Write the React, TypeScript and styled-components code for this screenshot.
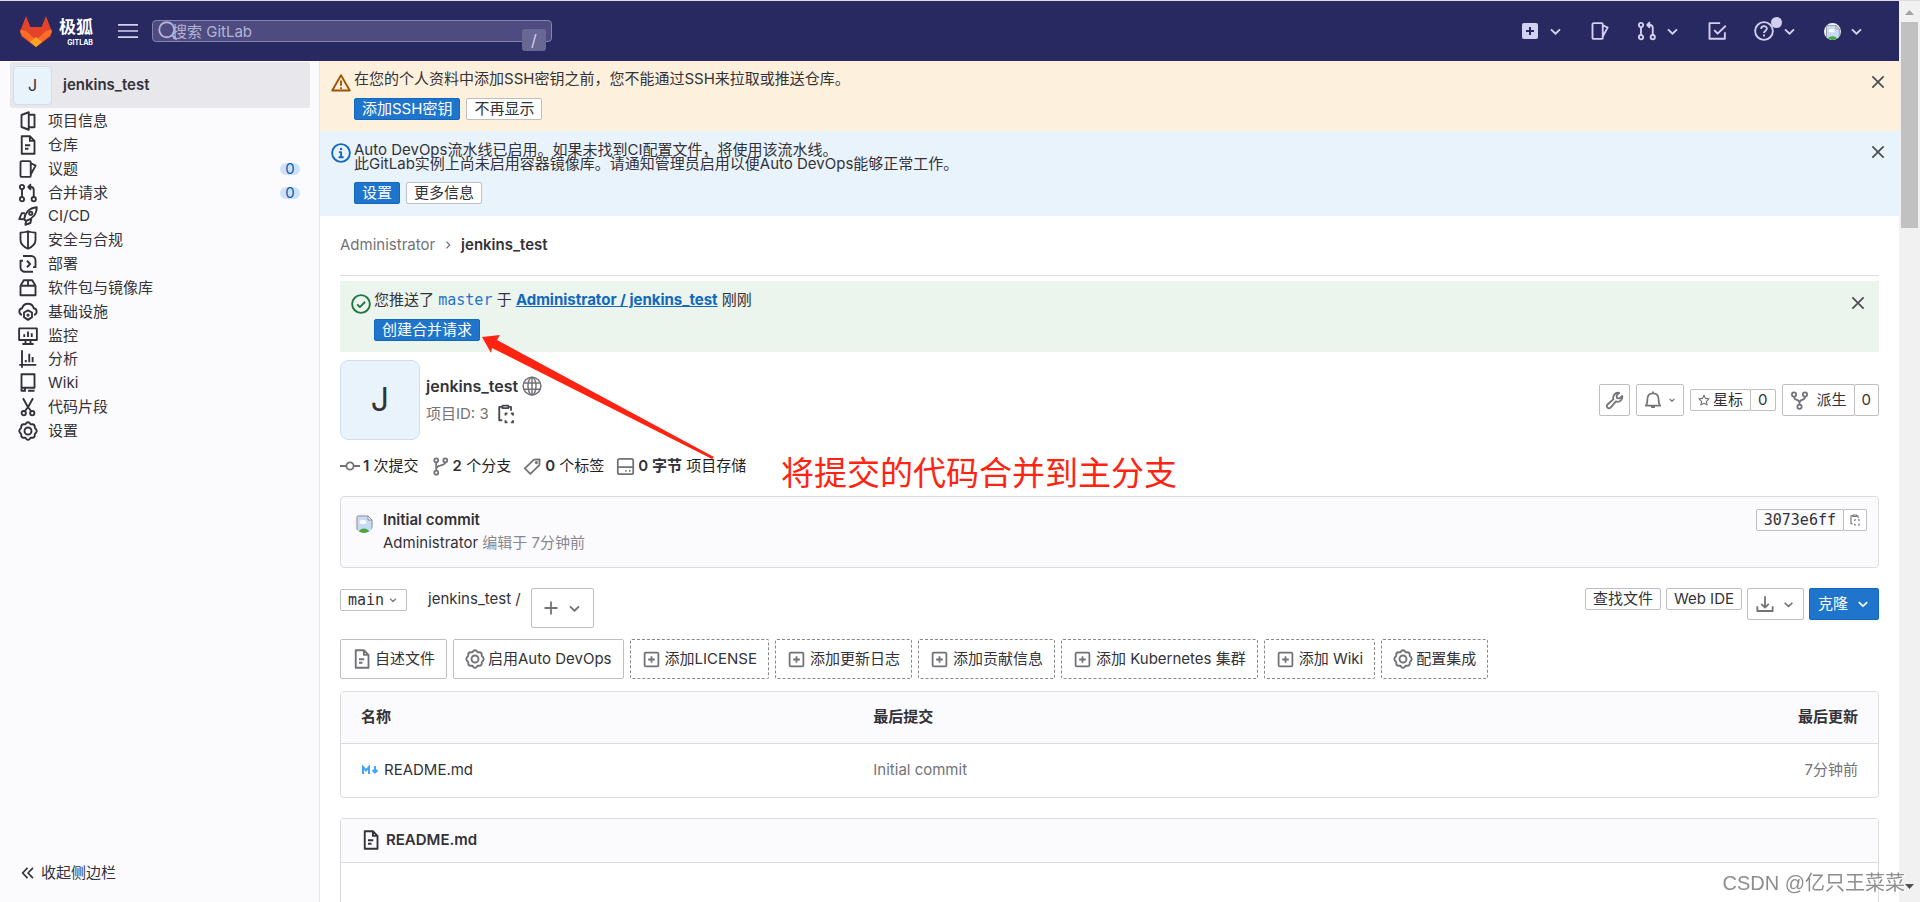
import React from 'react';
import styled, { createGlobalStyle, css } from 'styled-components';

const sans = `Inter, "Noto Sans CJK SC", sans-serif`;
const mono = `"DejaVu Sans Mono", "Noto Sans CJK SC", monospace`;

const GlobalStyle = createGlobalStyle`
  *, *::before, *::after { box-sizing: border-box; }
  body { margin: 0; font: 15px/20px ${sans}; color: #333238; background: #fff; overflow: hidden; }
  button, input, select { font: inherit; color: inherit; }
  ul { list-style: none; margin: 0; padding: 0; }
  p, h1, h2 { margin: 0; font-size: inherit; }
  a { color: inherit; text-decoration: none; }
`;

/* ---------- icons ---------- */

const icons: Record<string, React.ReactNode> = {
  project: <path d="M8.6 1 2.8 3.2v9.6L8.6 15zM8.6 3h4.6v10H8.6" />,
  doc: <path d="M9.5 1H3v14h10.2V4.7L9.5 1v3.7h3.7M5.6 8.2h4.2M5.6 11h2.8" />,
  issues: <path d="M3 1.700h6.200a1 1 0 0 1 1 1v10.600a1 1 0 0 1-1 1H3a1 1 0 0 1-1-1V2.700a1 1 0 0 1 1-1zM10.400 3.400l3.700 1.900-3.700 6.700" />,
  merge: (
    <>
      <circle cx="3.2" cy="3.2" r="1.7" />
      <circle cx="3.2" cy="12.9" r="1.7" />
      <circle cx="12.6" cy="12.9" r="1.7" />
      <path d="M3.2 5v6M12.6 11.1V5.5a2.3 2.3 0 0 0-2.3-2.3H8.4M10.4 1 8.2 3.2l2.2 2.2" />
    </>
  ),
  rocket: (
    <>
      <path d="M5 10.600C5.300 6 8.500 1.500 15 1c0 5.500-3.600 9.500-8.600 11zM5.500 5.800H3L1 10.500l4 .1M6.400 12l-.5 3 4-1.400.8-3.400" />
      <circle cx="10.200" cy="5.800" r="1.300" />
    </>
  ),
  shield: <path d="M8 1c2 .8 3.900 1.100 6 1.100V8c0 3.300-2.700 5.600-6 7-3.300-1.400-6-3.700-6-7V2.100C4.100 2.100 6 1.800 8 1zM8 1v14" />,
  deploy: <path d="M4 1.600h6.500A3.500 3.500 0 0 1 14 5.100v5.400h-2M12 14.200H5.500A3.500 3.500 0 0 1 2 10.700V5.400h2M7.200 5.400 9.700 8l-2.500 2.600" />,
  box: <path d="M2 6.200h12v7.600H2zM2 6.200l2.600-4.400h6.800L14 6.200M8 1.800v4.400" />,
  cloud: (
    <>
      <path d="M3.200 10.300A2.700 2.700 0 0 1 3.300 5 4.800 4.800 0 0 1 12.600 5a2.700 2.700 0 0 1 .2 5.300" />
      <path d="m8 6.700 3.200 1.700v3.700L8 14.300l-3.200-2.200V8.400z" />
      <circle cx="8" cy="10.500" r=".5" />
    </>
  ),
  monitor: <path d="M.9 1.900h14.200v9.300H.9zM3.500 14.400h9M6 11.200v3M10 11.200v3M5 6.600v2.200M8 4.400v4.400M11 5.800v3" />,
  chart: <path d="M3.200 1v14M1 12.700h13.600M6.200 8.800v1.800M9 3.800v6.800M11.700 6.400v4.200" />,
  book: <path d="M2.800 1h10.400v10.800H2.800zM2.800 11.800v2.400H6M5.600 11.800V15M8 14.200h5.200" />,
  scissors: (
    <>
      <circle cx="4.600" cy="12.900" r="1.700" />
      <circle cx="11.400" cy="12.900" r="1.700" />
      <path d="M4 1l3.900 7 2.700 3.400M12 1 8.100 8l-2.700 3.400" />
    </>
  ),
  gear: (
    <>
      <path d="M6.600 1.700Q8 .2 9.400 1.700l.8 1 1.300-.1q2 .1 1.900 2.200l.1.900.8.7q1.300 1.600 0 3.200l-.8.700-.1.900q.1 2.100-1.900 2.200l-1.300-.1-.8 1Q8 15.800 6.600 14.300l-.8-1-1.300.1q-2-.1-1.900-2.200l-.1-.9-.8-.7q-1.300-1.600 0-3.200l.8-.7.1-.9q-.1-2.100 1.900-2.200l1.300.1z" />
      <circle cx="8" cy="8" r="2.800" />
    </>
  ),
  collapse: <path d="M7.600 3.500 3.200 8l4.400 4.500M12.400 3.500 8 8l4.400 4.500" />,
  down: <path d="M3.200 5.800 8 10.400l4.800-4.600" />,
  right: <path d="m6 3.500 4.300 4.500L6 12.500" />,
  close: <path d="m3 3 10 10M13 3 3 13" />,
  warning: <path d="M8 1.800 1 14h14zM8 6v4.200M8 11.300v1.500" />,
  info: (
    <>
      <circle cx="8" cy="8" r="7.100" />
      <path d="M6.300 7.300h1.800v4M6.100 11.400h4M7.200 4.800h1.700" />
    </>
  ),
  check: (
    <>
      <circle cx="8" cy="8" r="7.100" />
      <path d="m4.900 8.300 2.200 2.200 4.200-4.300" />
    </>
  ),
  globe: (
    <>
      <circle cx="8" cy="8" r="7.100" />
      <ellipse cx="8" cy="8" rx="3.200" ry="7.100" />
      <path d="M8 1v14M1.600 5.500h12.800M1.600 10.500h12.800" />
    </>
  ),
  copy: (
    <>
      <path d="M5 2.300H2.600V13H5M10 2.300h2v3M5.200 1.300h4.600v2H5.200z" />
      <path d="M7.600 9.200V7.600h1.600M11.900 7.600h1.700v1.600M13.600 13v1.700h-1.700M9.200 14.700H7.600V13" />
    </>
  ),
  commit: (
    <>
      <circle cx="8" cy="8" r="2.900" />
      <path d="M0 8h5.100M10.900 8H16" />
    </>
  ),
  branch: (
    <>
      <circle cx="4.400" cy="2.800" r="1.700" />
      <circle cx="12" cy="2.800" r="1.700" />
      <circle cx="4.400" cy="13.200" r="1.700" />
      <path d="M4.400 4.500v7M12 4.500c0 3.500-7.600 1.500-7.600 5.500" />
    </>
  ),
  tag: (
    <>
      <path d="M9.200 2.200 14 2l-.2 4.800-7.600 7.400L1.500 9.600z" />
      <circle cx="11.300" cy="4.700" r=".6" />
    </>
  ),
  disk: <path d="M3 1.500h10a1.500 1.500 0 0 1 1.500 1.500v10a1.500 1.500 0 0 1-1.500 1.500H3A1.500 1.500 0 0 1 1.500 13V3A1.500 1.500 0 0 1 3 1.500zM1.500 8.500h13M7.700 11.600h1.200M10.900 11.600h1.200" />,
  wrench: <path d="M14.500 4.200a4 4 0 0 1-5.300 4.600L4.700 14a1.700 1.700 0 0 1-2.600-2.600l5.100-4.500a4 4 0 0 1 4.700-5.300L9.700 3.900l.4 2 2 .4z" />,
  bell: <path d="M1.600 13h12.800c-1.200-1.300-1.400-2.200-1.400-5.500C13 4 11 2.100 8 2.100S3 4 3 7.500C3 10.800 2.800 11.700 1.600 13zM8 .5v1.500M6.300 14.400h3.400" />,
  star: <path d="m8 1.500 2 4.400 4.700.6-3.500 3.300.9 4.700L8 12.200l-4.100 2.300.9-4.700L1.300 6.500 6 5.900z" />,
  fork: (
    <>
      <circle cx="3.400" cy="3" r="1.800" />
      <circle cx="12.600" cy="3" r="1.800" />
      <circle cx="8" cy="13.200" r="1.800" />
      <path d="M3.400 4.800c0 4 4.600 1.500 4.600 5.200v1.400M12.600 4.800c0 4-4.600 1.500-4.600 5.200" />
    </>
  ),
  plus: <path d="M8 1.500v13M1.500 8h13" />,
  download: <path d="M8 1v10M4.600 7.800 8 11.200l3.400-3.400M1.200 10v4.200h13.600V10" />,
  addBox: <path d="M3.200 2.200h9.600a1 1 0 0 1 1 1v9.600a1 1 0 0 1-1 1H3.200a1 1 0 0 1-1-1V3.200a1 1 0 0 1 1-1zM8 5.200v5.600M5.200 8h5.600" />,
  burger: <path d="M0 3.100h16M0 8h16M0 12.900h16" />,
  search: (
    <>
      <circle cx="7" cy="7" r="6" />
      <path d="m11.200 11.200 3.800 3.800" />
    </>
  ),
  todo: <path d="M10.500 1.700H2v12.500h12.300V9M5.800 7.300l2.700 2.800 6.500-6.300" />,
  help: (
    <>
      <circle cx="8" cy="8" r="7.100" />
      <path d="M5.700 6.300c.1-3 4.700-2.700 4.600-.1C10.200 7.800 8 7.700 8 9.600M8 10.800v1.600" />
    </>
  ),
};

const Svg = styled.svg<{ $color?: string }>`
  flex: none;
  display: block;
  fill: none;
  stroke: ${(p) => p.$color || 'currentColor'};
  stroke-linejoin: round;
`;

function Icon({ name, size = 20, color, weight = 1.5 }: { name: string; size?: number; color?: string; weight?: number }) {
  return (
    <Svg viewBox="0 0 16 16" width={size} height={size} strokeWidth={weight} $color={color} aria-hidden="true">
      {icons[name]}
    </Svg>
  );
}

function BrokenImage({ size }: { size: number }) {
  return (
    <svg viewBox="0 0 20 20" width={size} height={size} role="img" aria-label="avatar">
      <clipPath id="round"><circle cx="10" cy="10" r="10" /></clipPath>
      <g clipPath="url(#round)">
        <rect width="20" height="20" fill="#f4f4f6" />
        <path d="M3 3h11l4 4v13H3z" fill="#c8daf6" stroke="#8f8f93" />
        <path d="M14 3v4h4z" fill="#fff" stroke="#8f8f93" />
        <ellipse cx="9" cy="9" rx="3.500" ry="2" fill="#fff" />
        <ellipse cx="10" cy="18.500" rx="5" ry="3" fill="#4ca83c" />
      </g>
    </svg>
  );
}

/* ---------- frame ---------- */

const Screen = styled.div`
  display: grid;
  grid-template-columns: minmax(0, 1fr) 21px;
  height: 100vh;
  border-top: 1px solid #dcdcde;
`;
const Page = styled.div`
  display: grid;
  grid-template: 60px minmax(0, 1fr) / 320px minmax(0, 1fr);
  min-height: 0;
`;

const Header = styled.header`
  grid-column: 1 / -1;
  display: flex;
  align-items: center;
  padding: 0 35px 0 19px;
  background: #292961;
  color: #d1d0f0;
`;
const Brand = styled.a`
  display: flex;
  gap: 6px;
  color: #fff;
`;
const BrandText = styled.span`
  display: flex;
  flex-direction: column;
  align-items: flex-end;
  font-weight: 700;
  font-size: 17px;
  line-height: 23px;
`;
const BrandSub = styled.small`
  font-size: 7px;
  line-height: 8px;
`;
const Bare = styled.button`
  display: flex;
  align-items: center;
  padding: 0;
  border: 0;
  background: none;
  cursor: pointer;
`;
const Burger = styled(Bare)`
  margin: 0 14px 0 25px;
`;
const Search = styled.label`
  position: relative;
  display: block;
  width: 400px;
  height: 22px;
`;
const SearchInput = styled.input`
  display: block;
  width: 100%;
  height: 22px;
  padding: 0 30px 0 19px;
  border: 1px solid #8482b0;
  border-radius: 4px;
  background: #4d4b7f;
  outline: none;
  &::placeholder { color: #b5b3d6; opacity: 1; }
`;
const SearchGlyph = styled.span`
  position: absolute;
  left: 6px;
  top: 1px;
  color: #b5b3d6;
`;
const Key = styled.kbd`
  position: absolute;
  right: 6px;
  top: 9px;
  width: 24px;
  height: 22px;
  border-radius: 3px;
  background: #696793;
  font: 16px/22px ${sans};
  text-align: center;
`;
const HeaderNav = styled.nav`
  display: flex;
  align-items: center;
  gap: 27px;
  margin-left: auto;
`;
const HeaderItem = styled(Bare)`
  position: relative;
  gap: 8px;
`;
const Dot = styled.span`
  position: absolute;
  left: 17px;
  top: -4px;
  width: 11px;
  height: 11px;
  border-radius: 50%;
  background: #d1d0f0;
`;

/* ---------- sidebar ---------- */

const Sidebar = styled.aside`
  display: flex;
  flex-direction: column;
  padding: 1px 9px 19px 10px;
  border-right: 1px solid #e6e6ea;
  background: #fbfafd;
`;
const ProjectLink = styled.a`
  display: flex;
  align-items: center;
  gap: 11px;
  height: 46px;
  padding: 0 3px;
  border-radius: 3px;
  background: #e8e7eb;
  font-weight: 600;
`;
const Avatar = styled.span<{ $large?: boolean }>`
  flex: none;
  display: grid;
  place-items: center;
  width: ${(p) => (p.$large ? 80 : 39)}px;
  height: ${(p) => (p.$large ? 80 : 39)}px;
  border: 1px solid #d0dfec;
  border-radius: ${(p) => (p.$large ? 8 : 4)}px;
  background: #e9f3fc;
  font-size: ${(p) => (p.$large ? 32 : 16)}px;
  font-weight: 400;
`;
const Menu = styled.ul`
  display: flex;
  flex-direction: column;
  justify-content: space-between;
  height: 330px;
  margin-top: 3px;
`;
const MenuLink = styled.a`
  display: flex;
  align-items: center;
  gap: 10px;
  padding: 0 10px 0 8px;
`;
const Count = styled.span`
  width: 20px;
  height: 12px;
  margin-left: auto;
  border-radius: 6px;
  background: #cbe2f9;
  color: #0b5cad;
  line-height: 12px;
  text-align: center;
`;
const Collapse = styled(Bare)`
  gap: 4px;
  margin-top: auto;
  padding-left: 9px;
`;

/* ---------- content ---------- */

const Main = styled.main`
  position: relative;
  display: flex;
  flex-direction: column;
  min-width: 0;
  overflow: hidden;
`;
const tones = { warning: '#fdf1dd', info: '#e9f3fc', success: '#ecf4ee' };
const Banner = styled.section<{ $tone: keyof typeof tones }>`
  flex: none;
  display: flex;
  gap: 3px;
  padding: ${(p) => (p.$tone === 'success' ? 9 : 8)}px 12px ${(p) => (p.$tone === 'info' ? 12 : 11)}px 11px;
  background: ${(p) => tones[p.$tone]};
`;
const BannerIcon = styled.span`
  padding-top: 4px;
`;
const BannerBody = styled.div`
  flex: 1;
`;
const Tight = styled.div`
  padding-top: 4px;
  line-height: 14px;
`;
const Buttons = styled.div<{ $top: number }>`
  display: flex;
  gap: 6px;
  margin-top: ${(p) => p.$top}px;
`;
const Close = styled(Bare)`
  align-self: flex-start;
  padding-top: 4px;
`;

const Btn = styled.button<{ $primary?: boolean; $h?: number; $pad?: number; $gap?: number }>`
  flex: none;
  display: flex;
  align-items: center;
  justify-content: center;
  gap: ${(p) => p.$gap || 8}px;
  height: ${(p) => p.$h || 22}px;
  padding: 0 ${(p) => (p.$pad === undefined ? 7 : p.$pad)}px;
  border: 1px solid #bfbfc3;
  border-radius: 2px;
  background: #fff;
  line-height: 20px;
  white-space: nowrap;
  cursor: pointer;
  ${(p) => p.$primary && css`
    border-color: #1068bf;
    background: #1f75cb;
    color: #fff;
  `}
`;
const Group = styled.div`
  display: flex;
  & > * + * { margin-left: -1px; }
`;

const Content = styled.div`
  flex: 1;
  display: flex;
  flex-direction: column;
  min-height: 0;
  padding: 0 20px;
`;
const Breadcrumb = styled.nav`
  flex: none;
  display: flex;
  align-items: center;
  gap: 7px;
  height: 60px;
  margin-bottom: 5px;
  padding-bottom: 2px;
  border-bottom: 1px solid #dcdcde;
  color: #737278;
`;
const Strong = styled.strong`
  font-weight: 600;
  color: #333238;
`;
const RefLink = styled.a`
  color: #1f75cb;
  font-family: ${mono};
`;
const RepoLink = styled.a`
  color: #1068bf;
  font-weight: 700;
  text-decoration: underline;
`;

const ProjectHead = styled.div`
  flex: none;
  display: flex;
  align-items: center;
  gap: 6px;
  margin-top: 8px;
`;
const ProjectText = styled.div`
  flex: 1;
  display: flex;
  flex-direction: column;
  gap: 8px;
`;
const Line = styled.div<{ $gap: number }>`
  display: flex;
  align-items: center;
  gap: ${(p) => p.$gap}px;
  color: #737278;
`;
const Title = styled.h1`
  font-weight: 600;
  font-size: 16px;
  color: #333238;
`;
const Actions = styled.div`
  display: flex;
  align-items: center;
  gap: 6px;
`;
const Stats = styled.ul`
  flex: none;
  display: flex;
  gap: 12px;
  margin-top: 16px;
  color: #1f1e24;
`;
const Stat = styled.li`
  display: flex;
  align-items: center;
  gap: 3px;
`;

const CommitBox = styled.section`
  flex: none;
  display: flex;
  align-items: flex-start;
  gap: 9px;
  height: 72px;
  margin-top: 20px;
  padding: 12px 11px;
  border: 1px solid #dcdcde;
  border-radius: 4px;
  background: #fbfafd;
`;
const CommitAvatar = styled.span`
  padding: 4px 0 0 2px;
`;
const CommitText = styled.div`
  flex: 1;
  display: flex;
  flex-direction: column;
  gap: 3px;
  padding-top: 1px;
`;
const Muted = styled.span`
  color: #89888d;
`;
const Hash = styled(Btn)`
  background: #fbfafd;
  font-family: ${mono};
`;

const TreeBar = styled.div`
  flex: none;
  display: flex;
  align-items: flex-start;
  gap: 5px;
  height: 40px;
  margin-top: 20px;
`;
const BranchPicker = styled.label`
  position: relative;
  width: 67px;
  margin: 1px 16px 0 0;
`;
const BranchSelect = styled.select`
  appearance: none;
  display: block;
  width: 100%;
  height: 22px;
  padding: 0 7px;
  border: 1px solid #bfbfc3;
  border-radius: 2px;
  background: #fff;
  font-family: ${mono};
`;
const PickerArrow = styled.span`
  position: absolute;
  right: 9px;
  top: 6px;
  pointer-events: none;
`;
const Path = styled.span`
  padding-top: 1px;
  margin-right: 5px;
`;
const Spacer = styled.span`
  flex: 1;
`;

const Chips = styled.div`
  flex: none;
  display: flex;
  gap: 6px;
  margin-top: 11px;
`;
const Chip = styled(Btn)<{ $dashed?: boolean }>`
  height: 40px;
  padding: 0 11px;
  ${(p) => p.$dashed && css`border: 1px dashed #89888d;`}
`;

const FileFrame = styled.div`
  flex: none;
  margin-top: 12px;
  border: 1px solid #dcdcde;
  border-radius: 4px;
  overflow: hidden;
`;
const FileTable = styled.table`
  width: 100%;
  table-layout: fixed;
  border-collapse: collapse;
`;
const Th = styled.th<{ $right?: boolean }>`
  height: 51px;
  padding: 0 20px;
  background: #fbfafd;
  font-weight: 600;
  text-align: ${(p) => (p.$right ? 'right' : 'left')};
`;
const Td = styled.td<{ $right?: boolean }>`
  height: 54px;
  padding: 0 20px;
  border-top: 1px solid #dcdcde;
  color: #737278;
  text-align: ${(p) => (p.$right ? 'right' : 'left')};
`;
const FileLink = styled.a`
  display: flex;
  align-items: center;
  gap: 5px;
  color: #333238;
`;
const Readme = styled.section`
  flex: 1;
  margin-top: 20px;
  border: 1px solid #dcdcde;
  border-bottom: 0;
  border-radius: 4px 4px 0 0;
`;
const ReadmeTitle = styled.h2`
  display: flex;
  align-items: center;
  gap: 5px;
  height: 44px;
  padding: 0 20px 2px;
  border-bottom: 1px solid #dcdcde;
  background: #fbfafd;
  font-weight: 600;
`;

/* ---------- overlays ---------- */

const Arrow = styled.svg`
  position: absolute;
  left: 160px;
  top: 270px;
`;
const Note = styled.p`
  position: absolute;
  left: 461px;
  top: 392px;
  color: #ff2311;
  font-size: 33px;
  line-height: 40px;
  white-space: nowrap;
`;
const Watermark = styled.p`
  position: fixed;
  right: 15px;
  bottom: 4px;
  color: #8d8d90;
  font: 20px/30px "Liberation Sans", "Noto Sans CJK SC", sans-serif;
  text-shadow: 1px 1px 0 #fff;
`;
const Scrollbar = styled.div`
  display: flex;
  flex-direction: column;
  align-items: center;
  background: #f1f1f1;
`;
const Thumb = styled.div`
  width: 17px;
  height: 206px;
  background: #c1c1c1;
`;
const Bottom = styled.span`
  margin-top: auto;
`;

const menu: [string, string, number?][] = [
  ['project', '项目信息'], ['doc', '仓库'], ['issues', '议题', 0], ['merge', '合并请求', 0],
  ['rocket', 'CI/CD'], ['shield', '安全与合规'], ['deploy', '部署'], ['box', '软件包与镜像库'],
  ['cloud', '基础设施'], ['monitor', '监控'], ['chart', '分析'], ['book', 'Wiki'],
  ['scissors', '代码片段'], ['gear', '设置'],
];

const chips: [string, string, boolean][] = [
  ['doc', '自述文件', false], ['gear', '启用Auto DevOps', false], ['addBox', '添加LICENSE', true],
  ['addBox', '添加更新日志', true], ['addBox', '添加贡献信息', true], ['addBox', '添加 Kubernetes 集群', true],
  ['addBox', '添加 Wiki', true], ['gear', '配置集成', true],
];

function CloseButton() {
  return <Close aria-label="关闭"><Icon name="close" size={18} color="#4c4b51" /></Close>;
}

function TopBar() {
  return (
    <Header>
      <Brand href="#">
        <svg width="34" height="31" viewBox="0 0 34 31" aria-hidden="true">
          <path d="M7 0 11.500 11h11L27 0l5.500 14.500-1 6L17 31 2.500 20.500l-1-6z" fill="#e24329" />
          <path d="M17 31 4 20q-4-3-2.500-6.500L7 15l10 9 10-9 5.500-1.500Q34 17 30 20z" fill="#fc6d26" />
          <path d="m17 31-6-5 6-5 6 5z" fill="#fca326" />
        </svg>
        <BrandText>极狐<BrandSub>GITLAB</BrandSub></BrandText>
      </Brand>
      <Burger aria-label="菜单"><Icon name="burger" weight={1.3} /></Burger>
      <Search>
        <SearchInput placeholder="搜索 GitLab" aria-label="搜索 GitLab" />
        <SearchGlyph><Icon name="search" /></SearchGlyph>
        <Key>/</Key>
      </Search>
      <HeaderNav>
        <HeaderItem aria-label="新建">
          <svg width="20" height="20" viewBox="0 0 20 20" aria-hidden="true">
            <rect x="2" y="2" width="16" height="16" rx="2" fill="#d1d0f0" />
            <path d="M10 6v8M6 10h8" stroke="#292961" strokeWidth="2" />
          </svg>
          <Icon name="down" size={15} weight={2} />
        </HeaderItem>
        <HeaderItem aria-label="议题"><Icon name="issues" /></HeaderItem>
        <HeaderItem aria-label="合并请求"><Icon name="merge" /><Icon name="down" size={15} weight={2} /></HeaderItem>
        <HeaderItem aria-label="待办事项"><Icon name="todo" /></HeaderItem>
        <HeaderItem aria-label="帮助"><Icon name="help" /><Dot /><Icon name="down" size={15} weight={2} /></HeaderItem>
        <HeaderItem aria-label="用户"><BrokenImage size={17} /><Icon name="down" size={15} weight={2} /></HeaderItem>
      </HeaderNav>
    </Header>
  );
}

export default function App() {
  return (
    <Screen>
      <GlobalStyle />
      <Page>
        <TopBar />
        <Sidebar>
          <ProjectLink href="#"><Avatar>J</Avatar>jenkins_test</ProjectLink>
          <Menu>
            {menu.map(([icon, label, count]) => (
              <li key={label}>
                <MenuLink href="#">
                  <Icon name={icon} />{label}
                  {count !== undefined && <Count>{count}</Count>}
                </MenuLink>
              </li>
            ))}
          </Menu>
          <Collapse><Icon name="collapse" size={18} />收起侧边栏</Collapse>
        </Sidebar>
        <Main>
          <Banner $tone="warning">
            <BannerIcon><Icon name="warning" color="#9e5400" /></BannerIcon>
            <BannerBody>
              <p>在您的个人资料中添加SSH密钥之前，您不能通过SSH来拉取或推送仓库。</p>
              <Buttons $top={9}><Btn $primary>添加SSH密钥</Btn><Btn>不再显示</Btn></Buttons>
            </BannerBody>
            <CloseButton />
          </Banner>
          <Banner $tone="info">
            <BannerIcon><Icon name="info" color="#1068bf" /></BannerIcon>
            <BannerBody>
              <Tight>
                <p>Auto DevOps流水线已启用。如果未找到CI配置文件，将使用该流水线。</p>
                <p>此GitLab实例上尚未启用容器镜像库。请通知管理员启用以便Auto DevOps能够正常工作。</p>
              </Tight>
              <Buttons $top={11}><Btn $primary>设置</Btn><Btn>更多信息</Btn></Buttons>
            </BannerBody>
            <CloseButton />
          </Banner>
          <Content>
            <Breadcrumb>
              <a href="#">Administrator</a><Icon name="right" size={12} weight={1.6} /><Strong>jenkins_test</Strong>
            </Breadcrumb>
            <Banner $tone="success">
              <BannerIcon><Icon name="check" color="#217645" /></BannerIcon>
              <BannerBody>
                <p>您推送了 <RefLink href="#">master</RefLink> 于 <RepoLink href="#">Administrator / jenkins_test</RepoLink> 刚刚</p>
                <Buttons $top={9}><Btn $primary>创建合并请求</Btn></Buttons>
              </BannerBody>
              <CloseButton />
            </Banner>
            <ProjectHead>
              <Avatar $large>J</Avatar>
              <ProjectText>
                <Line $gap={4}><Title>jenkins_test</Title><Icon name="globe" weight={1.2} /></Line>
                <Line $gap={7}>项目ID: 3 <Bare aria-label="复制项目ID"><Icon name="copy" color="#4c4b51" /></Bare></Line>
              </ProjectText>
              <Actions>
                <Btn $h={32} $pad={5} aria-label="管理"><Icon name="wrench" size={19} color="#737278" /></Btn>
                <Btn $h={32} $gap={6} aria-label="通知"><Icon name="bell" size={18} color="#737278" /><Icon name="down" size={8} color="#737278" weight={2.5} /></Btn>
                <Group>
                  <Btn $gap={3}><Icon name="star" size={12} color="#737278" />星标</Btn>
                  <Btn>0</Btn>
                </Group>
                <Group>
                  <Btn $h={32}><Icon name="fork" size={19} color="#737278" />派生</Btn>
                  <Btn $h={32}>0</Btn>
                </Group>
              </Actions>
            </ProjectHead>
            <Stats>
              <Stat><Icon name="commit" color="#737278" /><span><Strong>1</Strong> 次提交</span></Stat>
              <Stat><Icon name="branch" size={19} color="#737278" /><span><Strong>2</Strong> 个分支</span></Stat>
              <Stat><Icon name="tag" size={19} color="#737278" /><span><Strong>0</Strong> 个标签</span></Stat>
              <Stat><Icon name="disk" size={19} color="#737278" /><span><Strong>0 字节</Strong> 项目存储</span></Stat>
            </Stats>
            <CommitBox>
              <CommitAvatar><BrokenImage size={20} /></CommitAvatar>
              <CommitText>
                <Strong>Initial commit</Strong>
                <span>Administrator <Muted>编辑于 7分钟前</Muted></span>
              </CommitText>
              <Group>
                <Hash>3073e6ff</Hash>
                <Btn $pad={5} aria-label="复制提交SHA"><Icon name="copy" size={12} color="#737278" /></Btn>
              </Group>
            </CommitBox>
            <TreeBar>
              <BranchPicker>
                <BranchSelect aria-label="分支" defaultValue="main"><option>main</option></BranchSelect>
                <PickerArrow><Icon name="down" size={10} weight={2} color="#737278" /></PickerArrow>
              </BranchPicker>
              <Path><a href="#">jenkins_test</a> /</Path>
              <Btn $h={40} $pad={11} aria-label="添加"><Icon name="plus" size={16} color="#737278" weight={1.8} /><Icon name="down" size={15} color="#737278" weight={2} /></Btn>
              <Spacer />
              <Btn>查找文件</Btn>
              <Btn>Web IDE</Btn>
              <Btn $h={32} $pad={8} aria-label="下载"><Icon name="download" size={18} color="#737278" weight={1.6} /><Icon name="down" size={13} color="#737278" weight={2} /></Btn>
              <Btn $h={32} $pad={8} $primary>克隆<Icon name="down" size={14} weight={2} /></Btn>
            </TreeBar>
            <Chips>
              {chips.map(([icon, label, dashed]) => (
                <Chip key={label} $dashed={dashed} $gap={icon === 'addBox' ? 4 : 3}>
                  <Icon name={icon} color="#737278" size={icon === 'addBox' ? 19 : 20} />{label}
                </Chip>
              ))}
            </Chips>
            <FileFrame>
              <FileTable>
                <thead><tr><Th>名称</Th><Th>最后提交</Th><Th $right>最后更新</Th></tr></thead>
                <tbody>
                  <tr>
                    <Td>
                      <FileLink href="#">
                        <svg width="18" height="10" viewBox="0 0 18 10" fill="none" stroke="#42a5f5" strokeWidth="2" aria-hidden="true">
                          <path d="M2 9V2l3 3.500L8 2v7M14 1v6M11.500 5 14 7.600 16.500 5" />
                        </svg>
                        README.md
                      </FileLink>
                    </Td>
                    <Td>Initial commit</Td>
                    <Td $right>7分钟前</Td>
                  </tr>
                </tbody>
              </FileTable>
            </FileFrame>
            <Readme>
              <ReadmeTitle><Icon name="doc" />README.md</ReadmeTitle>
            </Readme>
          </Content>
          <Arrow width="240" height="130" viewBox="0 0 240 130" aria-hidden="true">
            <path d="M2 6 20 4l-3 5 217 117-2 2L12 17l-1 5z" fill="#ff2311" />
          </Arrow>
          <Note>将提交的代码合并到主分支</Note>
        </Main>
      </Page>
      <Scrollbar aria-hidden="true">
        <svg width="17" height="21" viewBox="0 0 17 21"><path d="m4 14 4.500-5 4.500 5z" fill="#a3a3a3" /></svg>
        <Thumb />
        <Bottom><svg width="17" height="16" viewBox="0 0 17 16"><path d="m4 3 4.500 5L13 3z" fill="#505050" /></svg></Bottom>
      </Scrollbar>
      <Watermark>CSDN @亿只王菜菜</Watermark>
    </Screen>
  );
}
